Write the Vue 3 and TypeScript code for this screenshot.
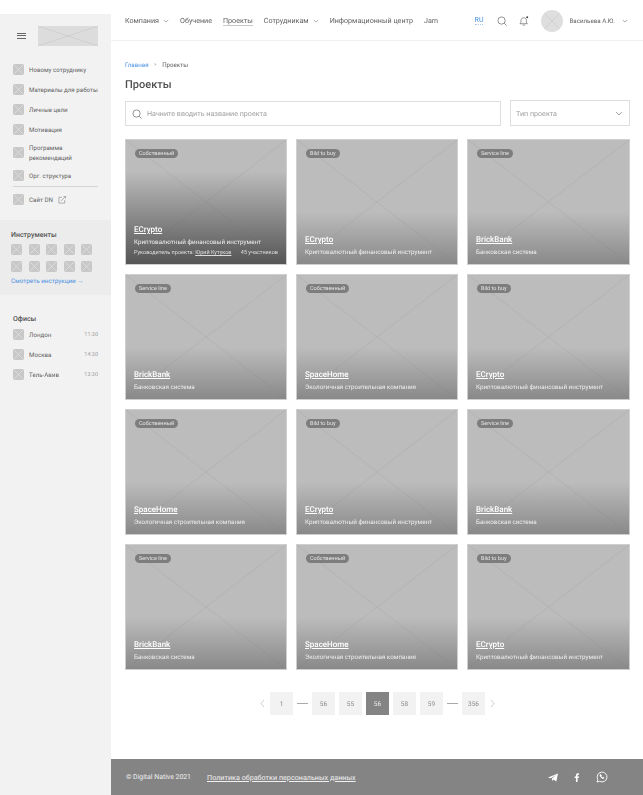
<script setup lang="ts">
interface Card { tag: string; title: string; desc: string; lead?: boolean }
const e = 'Криптовалютный финансовый инструмент';
const b = 'Банковская система';
const s = 'Экологичная строительная компания';
const cards: Card[] = [
  { tag: 'Собственный', title: 'ECrypto', desc: e, lead: true },
  { tag: 'Bild to buy', title: 'ECrypto', desc: e },
  { tag: 'Service line', title: 'BrickBank', desc: b },
  { tag: 'Service line', title: 'BrickBank', desc: b },
  { tag: 'Собственный', title: 'SpaceHome', desc: s },
  { tag: 'Bild to buy', title: 'ECrypto', desc: e },
  { tag: 'Собственный', title: 'SpaceHome', desc: s },
  { tag: 'Bild to buy', title: 'ECrypto', desc: e },
  { tag: 'Service line', title: 'BrickBank', desc: b },
  { tag: 'Service line', title: 'BrickBank', desc: b },
  { tag: 'Собственный', title: 'SpaceHome', desc: s },
  { tag: 'Bild to buy', title: 'ECrypto', desc: e },
];
const menu = ['Новому сотруднику', 'Материалы для работы', 'Личные цели', 'Мотивация', 'Программа рекомендаций', 'Орг. структура'];
const offices = [['Лондон', '11:30'], ['Москва', '14:30'], ['Тель-Авив', '13:30']];
const pages = ['1', '—', '56', '55', '56', '58', '59', '—', '356'];
</script>

<template>
  <div class="page">
    <aside class="side">
      <div class="brand">
        <span class="burger"><i></i><i></i><i></i></span>
        <svg class="ph logo" viewBox="0 0 60 20" preserveAspectRatio="none"><rect width="60" height="20" fill="#dcdcdc"/><path d="M0 0L60 20M60 0L0 20" stroke="#c4c4c4" stroke-width=".5" vector-effect="non-scaling-stroke"/></svg>
      </div>
      <nav class="menu">
        <div v-for="m in menu" :key="m" class="mi" :class="{ two: m.startsWith('Программа') }">
          <svg class="ph ic" viewBox="0 0 11 11"><rect width="11" height="11" rx="1" fill="#c8c8c8"/><path d="M0 0L11 11M11 0L0 11" stroke="#e6e6e6" stroke-width=".6"/></svg>
          <span>{{ m }}</span>
        </div>
      </nav>
      <div class="divider"></div>
      <div class="mi site">
        <svg class="ph ic" viewBox="0 0 11 11"><rect width="11" height="11" rx="1" fill="#c8c8c8"/><path d="M0 0L11 11M11 0L0 11" stroke="#e6e6e6" stroke-width=".6"/></svg>
        <span>Сайт DN</span>
        <svg class="ext" viewBox="0 0 9 9" fill="none" stroke="#777" stroke-width=".6"><path d="M4.500 1.500H1v6.500h6.500V4.500M3.500 5.500L8.500 .5M6 .5h2.500V3"/></svg>
      </div>
      <section class="tools">
        <h3>Инструменты</h3>
        <div class="tgrid">
          <svg v-for="n in 10" :key="n" class="ph ic" viewBox="0 0 11 11"><rect width="11" height="11" rx="1" fill="#c8c8c8"/><path d="M0 0L11 11M11 0L0 11" stroke="#e6e6e6" stroke-width=".6"/></svg>
        </div>
        <a class="look">Смотреть инструкции →</a>
      </section>
      <section class="offices">
        <h3>Офисы</h3>
        <div v-for="o in offices" :key="o[0]" class="mi office">
          <svg class="ph ic" viewBox="0 0 11 11"><rect width="11" height="11" rx="1" fill="#c8c8c8"/><path d="M0 0L11 11M11 0L0 11" stroke="#e6e6e6" stroke-width=".6"/></svg>
          <span>{{ o[0] }}</span>
          <em>{{ o[1] }}</em>
        </div>
      </section>
    </aside>

    <div class="right">
      <header class="top">
        <nav class="nav">
          <a>Компания <svg class="chev" viewBox="0 0 8 5"><path d="M1 1l3 3 3-3" fill="none" stroke="#666" stroke-width=".7"/></svg></a>
          <a>Обучение</a>
          <a class="cur">Проекты</a>
          <a>Сотрудникам <svg class="chev" viewBox="0 0 8 5"><path d="M1 1l3 3 3-3" fill="none" stroke="#666" stroke-width=".7"/></svg></a>
          <a>Информационный центр</a>
          <a>Jam</a>
        </nav>
        <div class="tools-top">
          <span class="lang">RU</span>
          <svg class="ti" viewBox="0 0 11 11" fill="none" stroke="#555" stroke-width=".7"><circle cx="5" cy="5" r="4"/><path d="M8 8l2.500 2.500"/></svg>
          <svg class="ti bell" viewBox="0 0 11 11" fill="none" stroke="#555" stroke-width=".7"><path d="M1 8.500c1-.8 1.200-1.500 1.200-3.500 0-1.800 1.300-3 3-3s3 1.200 3 3c0 2 .2 2.700 1 3.500zM4 10h2.500"/><circle cx="9" cy="1.500" r="1.100" fill="#444" stroke="none"/></svg>
          <svg class="avatar" viewBox="0 0 22 22"><circle cx="11" cy="11" r="11" fill="#dedede"/><path d="M3.500 3.500L18.500 18.500M18.500 3.500L3.500 18.500" stroke="#c4c4c4" stroke-width=".5"/></svg>
          <span class="user">Васильева А.Ю.</span>
          <svg class="chev" viewBox="0 0 8 5"><path d="M1 1l3 3 3-3" fill="none" stroke="#666" stroke-width=".7"/></svg>
        </div>
      </header>

      <main class="main">
        <div class="crumbs"><a>Главная</a><span class="sep">&gt;</span><span>Проекты</span></div>
        <h1>Проекты</h1>
        <div class="filters">
          <div class="search">
            <svg viewBox="0 0 11 11" fill="none" stroke="#555" stroke-width=".7"><circle cx="5" cy="5" r="4"/><path d="M8 8l2.500 2.500"/></svg>
            <span>Начните вводить название проекта</span>
          </div>
          <div class="select">
            <span>Тип проекта</span>
            <svg class="chev big" viewBox="0 0 8 5"><path d="M1 1l3 3 3-3" fill="none" stroke="#666" stroke-width=".6"/></svg>
          </div>
        </div>
        <div class="grid">
          <article v-for="(c, i) in cards" :key="i" class="card" :class="{ lead: c.lead }">
            <svg class="cross" viewBox="0 0 162 126" preserveAspectRatio="none"><path d="M0 0L162 126M162 0L0 126" stroke="#a6a6a6" stroke-width=".4"/></svg>
            <div class="shade"></div>
            <span class="tag">{{ c.tag }}</span>
            <div class="info">
              <a class="title">{{ c.title }}</a>
              <p>{{ c.desc }}</p>
              <div v-if="c.lead" class="meta"><span>Руководитель проекта: <u>Юрий Кутуков</u></span><span>45 участников</span></div>
            </div>
          </article>
        </div>
        <div class="pager">
          <svg class="arr" viewBox="0 0 5 9"><path d="M4 1L1 4.500 4 8" fill="none" stroke="#aaa" stroke-width=".6"/></svg>
          <template v-for="(p, i) in pages" :key="i">
            <span v-if="p === '—'" class="dash"></span>
            <span v-else class="pg" :class="{ on: i === 4 }">{{ p }}</span>
          </template>
          <svg class="arr" viewBox="0 0 5 9"><path d="M1 1L4 4.500 1 8" fill="none" stroke="#aaa" stroke-width=".6"/></svg>
        </div>
      </main>

      <footer class="foot">
        <span class="copy">© Digital Native 2021</span>
        <a>Политика обработки персональных данных</a>
        <div class="soc">
          <svg viewBox="0 0 10 9" class="s1"><path d="M0 4.500L10 .5 8.300 8.500 5.500 6.500 4.200 8 4 5.500 8 2 2.800 5.200z" fill="#fff"/></svg>
          <svg viewBox="0 0 6 10" class="s2"><path d="M1.800 10V5.500H.4V3.900h1.400V2.700C1.800 1.200 2.700.4 4 .4h1.300V2H4.400c-.6 0-.8.300-.8.800v1.100h1.600l-.2 1.600H3.600V10z" fill="#fff"/></svg>
          <svg viewBox="0 0 12 12" class="s3" fill="none" stroke="#fff" stroke-width=".9"><path d="M1 11l.8-2.600A4.900 4.900 0 1 1 3.700 10.300z"/><path d="M4.200 3.600c-.5.500-.4 1.400.5 2.500s1.900 1.700 2.600 1.500c.5-.1.800-.5.800-.9l-1.100-.6-.6.500c-.6-.3-1-.8-1.300-1.400l.4-.6-.5-1.100z" stroke-width=".5" fill="#fff"/></svg>
        </div>
      </footer>
    </div>
  </div>
</template>

<style>
body { margin: 0; background: #fff; }
</style>

<style scoped>
.page { display: flex; width: 643px; height: 795px; overflow: hidden; font-family: Roboto, "Noto Sans", sans-serif; color: #5f5f5f; text-rendering: geometricPrecision; will-change: opacity; }
.side { width: 111px; margin-top: 14px; background: #f2f2f2; flex: none; display: flex; flex-direction: column; }
.brand { display: flex; align-items: center; height: 42px; padding: 1px 13px 0 17px; gap: 12px; box-sizing: border-box; }
.burger { display: flex; flex-direction: column; gap: 1.500px; width: 9px; }
.burger i { height: 1px; background: #666; display: block; }
.logo { width: 60px; height: 20px; }
.ph { display: block; flex: none; }
.ic { width: 11px; height: 11px; }
.menu { display: flex; flex-direction: column; padding: 8px 13px 0; gap: 9px; }
.mi { display: flex; align-items: center; gap: 5px; font-size: 6.200px; line-height: 10px; min-height: 11px; white-space: nowrap; }
.mi.two { line-height: 10px; white-space: normal; margin: -1.500px 0; }
.mi.two span { width: 50px; }
.divider { height: 1px; background: #d4d4d4; margin: 5px 13px 7px; }
.site { padding: 0 13px; }
.ext { width: 8px; height: 8px; }
.tools { background: #ececec; height: 75px; margin-top: 15px; padding: 10px 11px 0; box-sizing: border-box; }
h3 { margin: 0; font-size: 7px; line-height: 10px; font-weight: 500; color: #555; }
.tgrid { display: grid; grid-template-columns: repeat(5, 11px); column-gap: 6.500px; row-gap: 6px; margin-top: 4px; }
.look { display: block; color: #4a90e2; font-size: 6.300px; line-height: 8px; margin-top: 5px; }
.offices { padding: 19px 13px 0; display: flex; flex-direction: column; gap: 9px; }
.offices h3 { margin-bottom: -4px; }
.office em { margin-left: auto; font-style: normal; font-size: 5.500px; color: #a0a0a0; }
.right { flex: 1; min-width: 0; display: flex; flex-direction: column; }
.top { height: 41px; box-sizing: border-box; border-bottom: 1px solid #f2f2f2; display: flex; align-items: center; padding: 1px 15px 0 14px; justify-content: space-between; flex: none; }
.nav { display: flex; gap: 11px; font-size: 7.150px; color: #5f5f5f; white-space: nowrap; }
.nav a { display: flex; align-items: center; gap: 4px; }
.nav .cur { border-bottom: 1px solid #c8c8c8; line-height: 9px; }
.chev { width: 6px; height: 4px; flex: none; }
.tools-top { display: flex; align-items: center; }
.lang { color: #4a90e2; font-size: 7px; border-bottom: 1px dotted #a8c8ee; margin-right: 14px; }
.ti { width: 10px; height: 10px; margin-right: 12px; }
.avatar { width: 22px; height: 22px; margin-right: 6px; }
.user { font-size: 6.200px; margin-right: 7px; white-space: nowrap; }
.main { flex: 1; padding: 19px 13px 0 14px; }
.crumbs { display: flex; align-items: center; font-size: 6.200px; line-height: 10px; }
.crumbs a { color: #4a90e2; }
.sep { margin: 0 5.500px; font-size: 5px; color: #999; }
h1 { margin: 5px 0 0; font-size: 11px; line-height: 20px; font-weight: 500; color: #4f4f4f; }
.filters { display: flex; align-items: flex-end; gap: 9px; margin-top: 5px; height: 26px; }
.search, .select { box-sizing: border-box; border: 1px solid #dedede; display: flex; align-items: center; font-size: 7.150px; color: #a0a0a0; }
.search { flex: 1; height: 25px; padding: 0 6px; gap: 5px; }
.search svg { width: 10px; height: 10px; }
.select { width: 120px; height: 26px; justify-content: space-between; padding: 0 6px 0 5px; }
.big { width: 8px; height: 5px; }
.grid { display: grid; grid-template-columns: 162px 162px 163px; gap: 9px; margin-top: 13px; }
.card { position: relative; height: 126px; background: #bcbcbc; overflow: hidden; color: #fff; border: 1px solid #cfcfcf; box-sizing: border-box; }
.cross { position: absolute; inset: 0; width: 100%; height: 100%; }
.shade { position: absolute; inset: 0; background: linear-gradient(to bottom, rgba(120,120,120,0) 58%, rgba(110,110,110,.65) 100%); }
.lead .shade { background: linear-gradient(to bottom, rgba(80,80,80,0) 25%, rgba(80,80,80,.95) 100%); }
.tag { position: absolute; left: 9px; top: 9px; height: 9px; line-height: 10px; padding: 0 4px; border-radius: 5px; background: #7d7d7d; font-size: 5.500px; color: #e4e4e4; }
.info { position: absolute; left: 8px; right: 8px; bottom: 7px; }
.lead .info { bottom: 6px; }
.title { display: inline-block; font-size: 8px; line-height: 10px; font-weight: 500; text-decoration: underline; text-underline-offset: 1px; }
.info p { margin: 2px 0 0; font-size: 6.250px; line-height: 9px; color: #eee; white-space: nowrap; }
.meta { display: flex; justify-content: space-between; font-size: 5.500px; line-height: 9px; margin-top: 2px; color: #ddd; white-space: nowrap; }
.pager { display: flex; align-items: center; justify-content: center; gap: 4px; margin-top: 22px; height: 23px; }
.pg { width: 23px; height: 23px; background: #f2f2f2; display: flex; align-items: center; justify-content: center; font-size: 6.500px; color: #888; }
.pg.on { background: #848484; color: #eee; }
.dash { width: 11px; height: 1px; background: #aaa; }
.arr { width: 5px; height: 9px; margin: 0 1px; }
.foot { height: 36px; flex: none; background: #848484; color: #f0f0f0; font-size: 7.200px; display: flex; align-items: center; padding: 0 14px 0 15px; gap: 16px; }
.copy { font-size: 6.900px; }
.foot a { text-decoration: underline; text-underline-offset: 1px; }
.soc { margin-left: auto; display: flex; align-items: center; gap: 16px; padding-right: 21px; }
.s1 { width: 10px; height: 9px; }
.s2 { width: 6px; height: 9px; }
.s3 { width: 12px; height: 12px; }
</style>
